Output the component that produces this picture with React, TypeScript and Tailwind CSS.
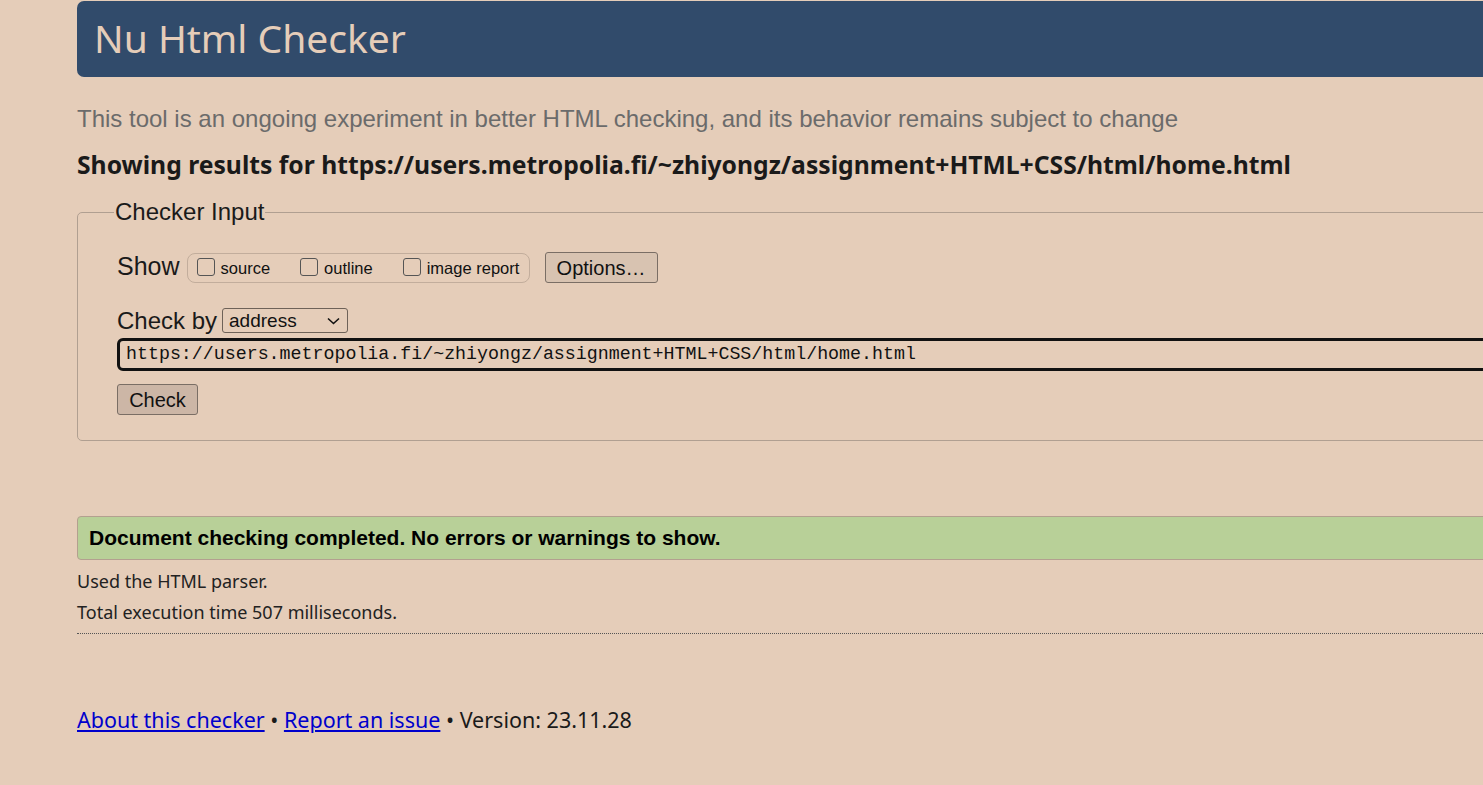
import React from "react";

const segoe = { fontFamily: '"Noto Sans", "Open Sans", sans-serif' };

function Box({ label }: { label: string }) {
  return (
    <label className="flex items-end gap-[6px]">
      <span className="mb-[7px] inline-block h-[18px] w-[18px] rounded-[3px] border border-[#555] bg-transparent" />
      <span className="text-[16.5px] leading-[30px] text-[#111]">{label}</span>
    </label>
  );
}

export default function App() {
  return (
    <div
      className="h-[785px] w-[1483px] overflow-hidden bg-[#e5cdb9]"
      style={{ fontFamily: '"Liberation Sans", Arial, sans-serif' }}
    >
      <div className="ml-[77px] w-[1600px] pt-[1px]">
        <div className="flex h-[76px] items-center rounded-l-[7px] bg-[#314b6b] pb-[4px] pl-[17px]">
          <h1
            className="text-[39px] font-normal leading-none text-[#e5cdb9]"
            style={segoe}
          >
            Nu Html Checker
          </h1>
        </div>

        <p className="mt-[29px] text-[24px] leading-[26px] text-[#6b6b6b]">
          This tool is an ongoing experiment in better HTML checking, and its behavior remains subject to change
        </p>
        <p
          className="mt-[20px] text-[24.7px] font-bold leading-[26px] text-[#1a1a1a]"
          style={segoe}
        >
          Showing results for https://users.metropolia.fi/~zhiyongz/assignment+HTML+CSS/html/home.html
        </p>

        <fieldset className="mt-[21px] rounded-[5px] border border-[#b09f91] pb-[25px] pl-[39px]">
          <legend className="px-[1px] text-[24px] leading-[26px] text-[#1a1a1a]" style={{ marginLeft: -3 }}>
            Checker Input
          </legend>
          <div className="mt-[27px] flex h-[31px] items-center">
            <span className="pb-[2px] text-[25px] text-[#1a1a1a]">Show</span>
            <div className="ml-[7px] flex h-[30px] w-[343px] items-center gap-[30px] rounded-[8px] border border-[#c2ad9c] pl-[9px]">
              <Box label="source" />
              <Box label="outline" />
              <Box label="image report" />
            </div>
            <button className="ml-[15px] h-[31px] w-[113px] rounded-[3px] border border-[#7a6e65] bg-[#d8c3b1] text-[20px] text-[#111]">
              Options…
            </button>
          </div>
          <div className="mt-[25px] flex h-[25px] items-center">
            <span className="text-[24px] leading-[26px] text-[#1a1a1a]">Check by</span>
            <div className="ml-[5px] flex h-[25px] w-[126px] items-center justify-between rounded-[3px] border border-[#6e6258] pl-[6px] pr-[7px]">
              <span className="text-[19px] leading-none text-[#111]">address</span>
              <svg width="13" height="8" viewBox="0 0 13 8" fill="none">
                <path d="M1 1.5 L6.5 6.5 L12 1.5" stroke="#111" strokeWidth="1.6" />
              </svg>
            </div>
          </div>
          <div className="mt-[5px] flex h-[33px] items-center rounded-[6px] border-[3px] border-[#111] pl-[6px]">
            <span
              className="text-[18.3px] text-[#111]"
              style={{ fontFamily: '"Liberation Mono", "DejaVu Sans Mono", monospace' }}
            >
              https://users.metropolia.fi/~zhiyongz/assignment+HTML+CSS/html/home.html
            </span>
          </div>
          <button className="mt-[13px] h-[31px] w-[81px] rounded-[3px] border border-[#7a6e65] bg-[#ccb6a6] pb-[2px] text-[20px] text-[#111]">
            Check
          </button>
        </fieldset>

        <div className="mt-[75px] flex h-[44px] items-center rounded-l-[4px] border border-[#b3a08f] bg-[#b8d098] pl-[11px]">
          <span className="text-[21px] font-bold text-black">
            Document checking completed. No errors or warnings to show.
          </span>
        </div>
        <p className="mt-[8px] text-[18px] leading-[26px] text-[#222]" style={segoe}>
          Used the HTML parser.
        </p>
        <p className="mt-[5px] text-[18px] leading-[26px] text-[#222]" style={segoe}>
          Total execution time 507 milliseconds.
        </p>
        <div className="mt-[8px] border-t border-dotted border-[#555]" />

        <p className="mt-[70px] text-[21.5px] text-[#1a1a1a]" style={segoe}>
          <a href="#" className="text-[#0000cc] underline">About this checker</a>
          {" • "}
          <a href="#" className="text-[#0000cc] underline">Report an issue</a>
          {" • Version: 23.11.28"}
        </p>
      </div>
    </div>
  );
}
